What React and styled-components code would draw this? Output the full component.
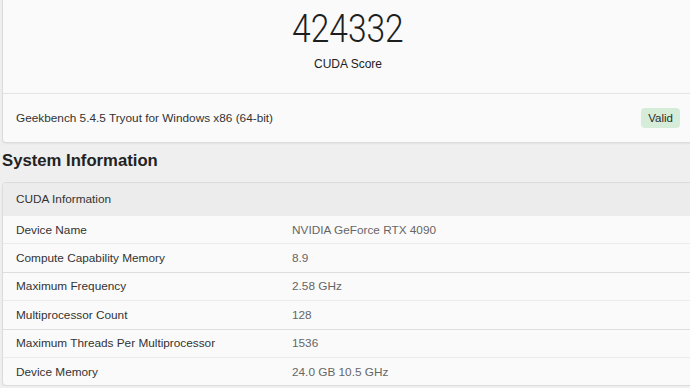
import styled, { createGlobalStyle } from "styled-components";

const GlobalStyle = createGlobalStyle`
  html, body {
    margin: 0;
    padding: 0;
    background: #efefef;
    overflow: hidden;
  }
  body {
    font-family: "Liberation Sans", Arial, sans-serif;
    color: #333;
  }
`;

const Page = styled.div`
  width: 720px;
  padding-left: 2px;
`;

const Card = styled.div`
  background: #fafafa;
  border: 1px solid #dcdcdc;
  border-radius: 4px;
  box-shadow: 0 1px 2px rgba(0, 0, 0, 0.06);
`;

const ScoreCard = styled(Card)`
  border-top: none;
  border-top-left-radius: 0;
  border-top-right-radius: 0;
`;

const ScoreBlock = styled.div`
  display: flex;
  flex-direction: column;
  align-items: center;
  padding: 7px 0 0;
  height: 86px;
  width: 690px;
  border-bottom: 1px solid #e4e4e4;
`;

/* the score face is a light, slightly condensed sans */
const Score = styled.div`
  font-family: Roboto, "Liberation Sans", sans-serif;
  font-weight: 300;
  font-size: 39px;
  line-height: 44px;
  color: #1e1e1e;
  transform: scaleX(0.86);
`;

const ScoreLabel = styled.div`
  margin-top: 6px;
  font-size: 12px;
  line-height: 14px;
  color: #222;
`;

const VersionRow = styled.div`
  display: flex;
  align-items: center;
  justify-content: space-between;
  width: 690px;
  box-sizing: border-box;
  height: 48px;
  padding: 0 13px 0 13px;
  font-size: 11.8px;
`;

const Badge = styled.span`
  background: #d5ecd9;
  color: #2b2b2b;
  border-radius: 4px;
  padding: 0 7px;
  height: 20px;
  line-height: 20px;
  font-size: 11.5px;
`;

const Heading = styled.h2`
  margin: 8px 0 11px;
  font-size: 16.7px;
  line-height: 20px;
  font-weight: bold;
  color: #222;
`;

const TableCard = styled(Card)`
  overflow: hidden;
`;

const TableHeader = styled.div`
  display: flex;
  align-items: center;
  height: 32px;
  padding-left: 13px;
  background: #ececec;
  font-size: 11.8px;
  color: #333;
`;

const Row = styled.div`
  display: grid;
  grid-template-columns: 276px 1fr;
  align-items: center;
  box-sizing: border-box;
  height: 28.4px;
  padding-left: 13px;
  border-top: 1px solid ${({ strong }) => (strong ? "#dedede" : "#ececec")};
  font-size: 11.8px;
`;

const Label = styled.span`
  color: #333;
`;

const Value = styled.span`
  color: #666;
`;

const rows = [
  ["Device Name", "NVIDIA GeForce RTX 4090"],
  ["Compute Capability Memory", "8.9"],
  ["Maximum Frequency", "2.58 GHz"],
  ["Multiprocessor Count", "128"],
  ["Maximum Threads Per Multiprocessor", "1536"],
  ["Device Memory", "24.0 GB 10.5 GHz"],
];

export default function App() {
  return (
    <Page>
      <GlobalStyle />
      <ScoreCard>
        <ScoreBlock>
          <Score>424332</Score>
          <ScoreLabel>CUDA Score</ScoreLabel>
        </ScoreBlock>
        <VersionRow>
          <span>Geekbench 5.4.5 Tryout for Windows x86 (64-bit)</span>
          <Badge>Valid</Badge>
        </VersionRow>
      </ScoreCard>
      <Heading>System Information</Heading>
      <TableCard>
        <TableHeader>CUDA Information</TableHeader>
        {rows.map(([label, value], i) => (
          <Row key={label} strong={i % 2 === 0 && i > 0}>
            <Label>{label}</Label>
            <Value>{value}</Value>
          </Row>
        ))}
      </TableCard>
    </Page>
  );
}
